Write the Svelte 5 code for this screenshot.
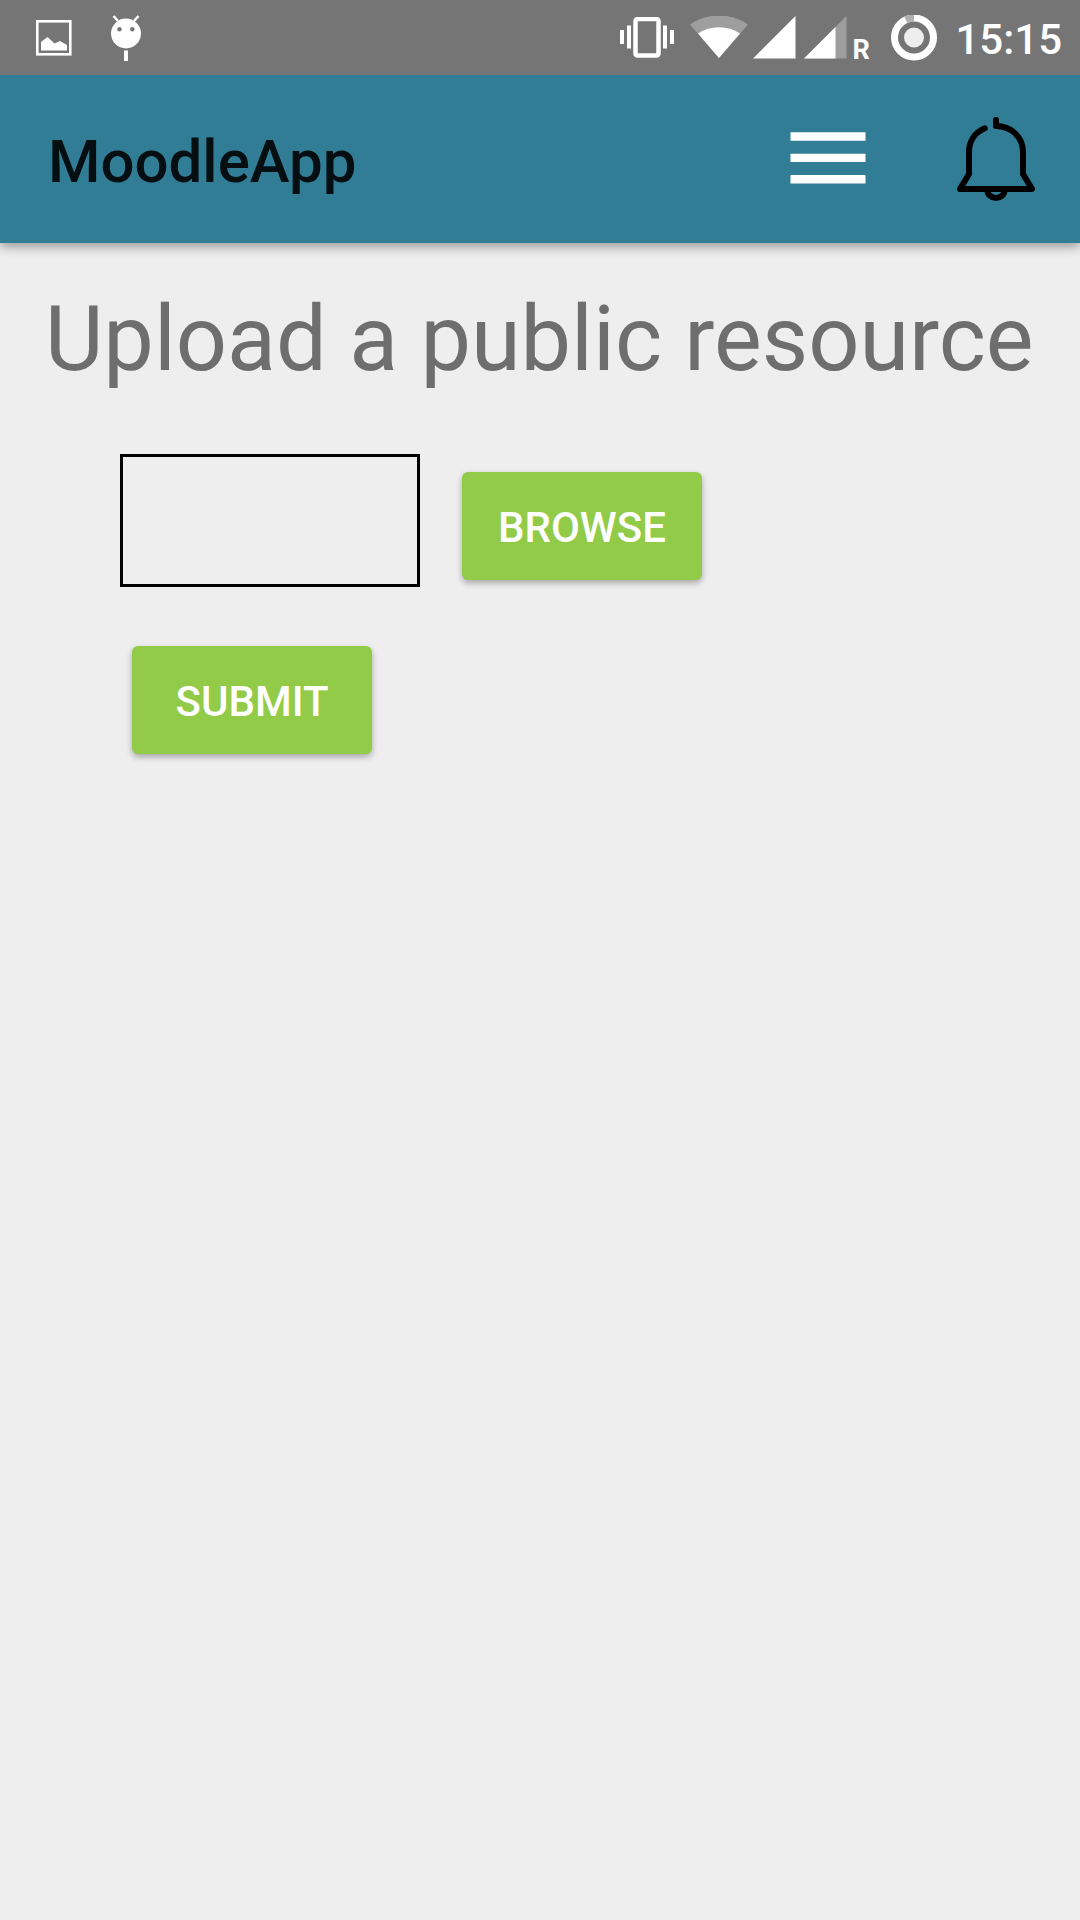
<script>
  let resource = $state('');
</script>

<div class="screen">
  <div class="status">
    <svg class="picture" width="36" height="36" viewBox="0 0 36 36" aria-hidden="true">
      <rect x="1.300" y="1.300" width="33" height="33" fill="none" stroke="#fff" stroke-width="2.600" />
      <path d="M5 30.500V22l6.500-5 7 6.500 5.500-2.500 7 4v5.500z" fill="#fff" />
    </svg>
    <svg class="droid" width="32" height="46" viewBox="0 0 32 46" aria-hidden="true">
      <path d="M3.500 1l4.500 5M28.500 1l-4.500 5" stroke="#fff" stroke-width="2.500" />
      <circle cx="16" cy="18.500" r="15" fill="#fff" />
      <circle cx="9.500" cy="14.300" r="2.200" fill="#757575" />
      <circle cx="22.300" cy="14.300" r="2.200" fill="#757575" />
      <rect x="14" y="35.500" width="4" height="10.500" fill="#fff" />
    </svg>
    <svg class="vibrate" width="54" height="42" viewBox="0 0 54 42" aria-hidden="true">
      <path d="M0 13h4v14H0zM7 8.500h4v23H7zM43 8.500h4v23h-4zM50 13h4v14h-4z" fill="#fff" />
      <rect x="15.500" y="2" width="23" height="36.500" rx="2" fill="none" stroke="#fff" stroke-width="4.500" />
    </svg>
    <svg class="wifi" width="58" height="44" viewBox="0 0 58 44" aria-hidden="true">
      <path d="M29 42L0 8.500C16-3.500 42-3.500 58 8.500z" fill="#9e9e9e" />
      <path d="M29 42L8 17.500C20 9 38 9 50 17.500z" fill="#fff" />
    </svg>
    <svg class="signal" width="43" height="43" viewBox="0 0 43 43" aria-hidden="true">
      <path d="M0 42.500L42.500 0V42.500z" fill="#fff" />
    </svg>
    <svg class="signal roaming" width="43" height="43" viewBox="0 0 43 43" aria-hidden="true">
      <path d="M0 42.500L42.500 0V42.500z" fill="#9e9e9e" />
      <path d="M0 42.500L31.500 11V42.500z" fill="#fff" />
    </svg>
    <span class="r">R</span>
    <svg class="battery" width="46" height="46" viewBox="0 0 46 46" aria-hidden="true">
      <circle cx="23" cy="22.500" r="19.500" fill="none" stroke="#fff" stroke-width="7" />
      <path d="M14.800 4.800A19.500 19.500 0 0 1 23 3" fill="none" stroke="#b0b0b0" stroke-width="7" />
      <circle cx="23" cy="22.500" r="10" fill="#eee" />
    </svg>
    <time>15:15</time>
  </div>

  <header>
    <span class="title">MoodleApp</span>
    <button class="icon" aria-label="Menu">
      <svg width="76" height="54" viewBox="0 0 76 54">
        <path d="M0.500 0.300h75v8.500h-75zM0.500 21.700h75v8.300h-75zM0.500 43h75v8.500h-75z" fill="#fff" />
      </svg>
    </button>
    <button class="icon" aria-label="Notifications">
      <svg width="78" height="84" viewBox="0 0 78 84" fill="none" stroke="#000" stroke-width="6" stroke-linecap="round" stroke-linejoin="round">
        <path d="M39 3V9C54 9 66 20 66 35V57L75 72H3L12 57V35C12 24 18 15.500 27.700 11.300" />
        <path d="M30.500 73.500A8.500 7.500 0 0 0 47.500 73.500" />
      </svg>
    </button>
  </header>

  <main>
    <h1>Upload a public resource</h1>
    <form onsubmit={(event) => event.preventDefault()}>
      <input type="text" aria-label="Resource" bind:value={resource} />
      <button class="action" type="button">BROWSE</button>
      <button class="action" type="submit">SUBMIT</button>
    </form>
  </main>
</div>

<style>
  :global(body) {
    margin: 0;
    background: #eee;
  }

  .screen {
    min-height: 100vh;
    background: #eee;
    font-family: Roboto, 'Liberation Sans', sans-serif;
  }

  svg {
    display: block;
    flex: none;
  }

  .status {
    position: relative;
    z-index: 1;
    display: flex;
    align-items: center;
    box-sizing: border-box;
    height: 75px;
    padding: 0 18px 0 36px;
    background: #757575;
    color: #fff;
  }

  .droid {
    margin-left: 38px;
  }

  .vibrate {
    margin-left: auto;
  }

  .wifi {
    margin-left: 16px;
  }

  .signal {
    margin-left: 5px;
  }

  .roaming {
    margin-left: 8px;
  }

  .r {
    width: 16px;
    margin-left: 5px;
    padding-top: 24px;
    font-size: 27px;
    font-weight: 700;
    line-height: 28px;
  }

  .battery {
    margin-left: 23px;
  }

  time {
    margin-left: 18px;
    padding-top: 5px;
    font-size: 42px;
    font-weight: 500;
    line-height: 48px;
  }

  header {
    position: relative;
    display: flex;
    align-items: center;
    box-sizing: border-box;
    height: 168px;
    padding: 0 45px 0 48px;
    background: #317d96;
    box-shadow: 0 4px 10px rgba(0, 0, 0, 0.35);
  }

  .title {
    flex: 1;
    padding-top: 5px;
    font-size: 60px;
    font-weight: 500;
    line-height: 72px;
    color: #050f12;
  }

  .icon {
    margin: 0 0 0 91px;
    padding: 0;
    border: 0;
    background: none;
  }

  main {
    padding: 44px 24px 0 45px;
  }

  h1 {
    margin: 0;
    font-size: 90px;
    font-weight: 400;
    line-height: 106px;
    color: #6e6e6e;
  }

  form {
    display: grid;
    grid-template-columns: 300px auto;
    justify-content: start;
    align-items: start;
    gap: 30px;
    padding: 61px 0 0 75px;
  }

  input {
    box-sizing: border-box;
    width: 100%;
    height: 133px;
    padding: 0 18px;
    border: 3px solid #000;
    border-radius: 0;
    background: transparent;
    font: inherit;
    font-size: 42px;
  }

  .action {
    width: 240px;
    height: 108px;
    margin: 18px 12px;
    padding: 4px 0 0;
    border: 0;
    border-radius: 6px;
    background: #91cb48;
    box-shadow: 0 3px 6px rgba(0, 0, 0, 0.3);
    color: #fff;
    font-family: inherit;
    font-size: 42px;
    font-weight: 500;
    line-height: 48px;
  }
</style>
